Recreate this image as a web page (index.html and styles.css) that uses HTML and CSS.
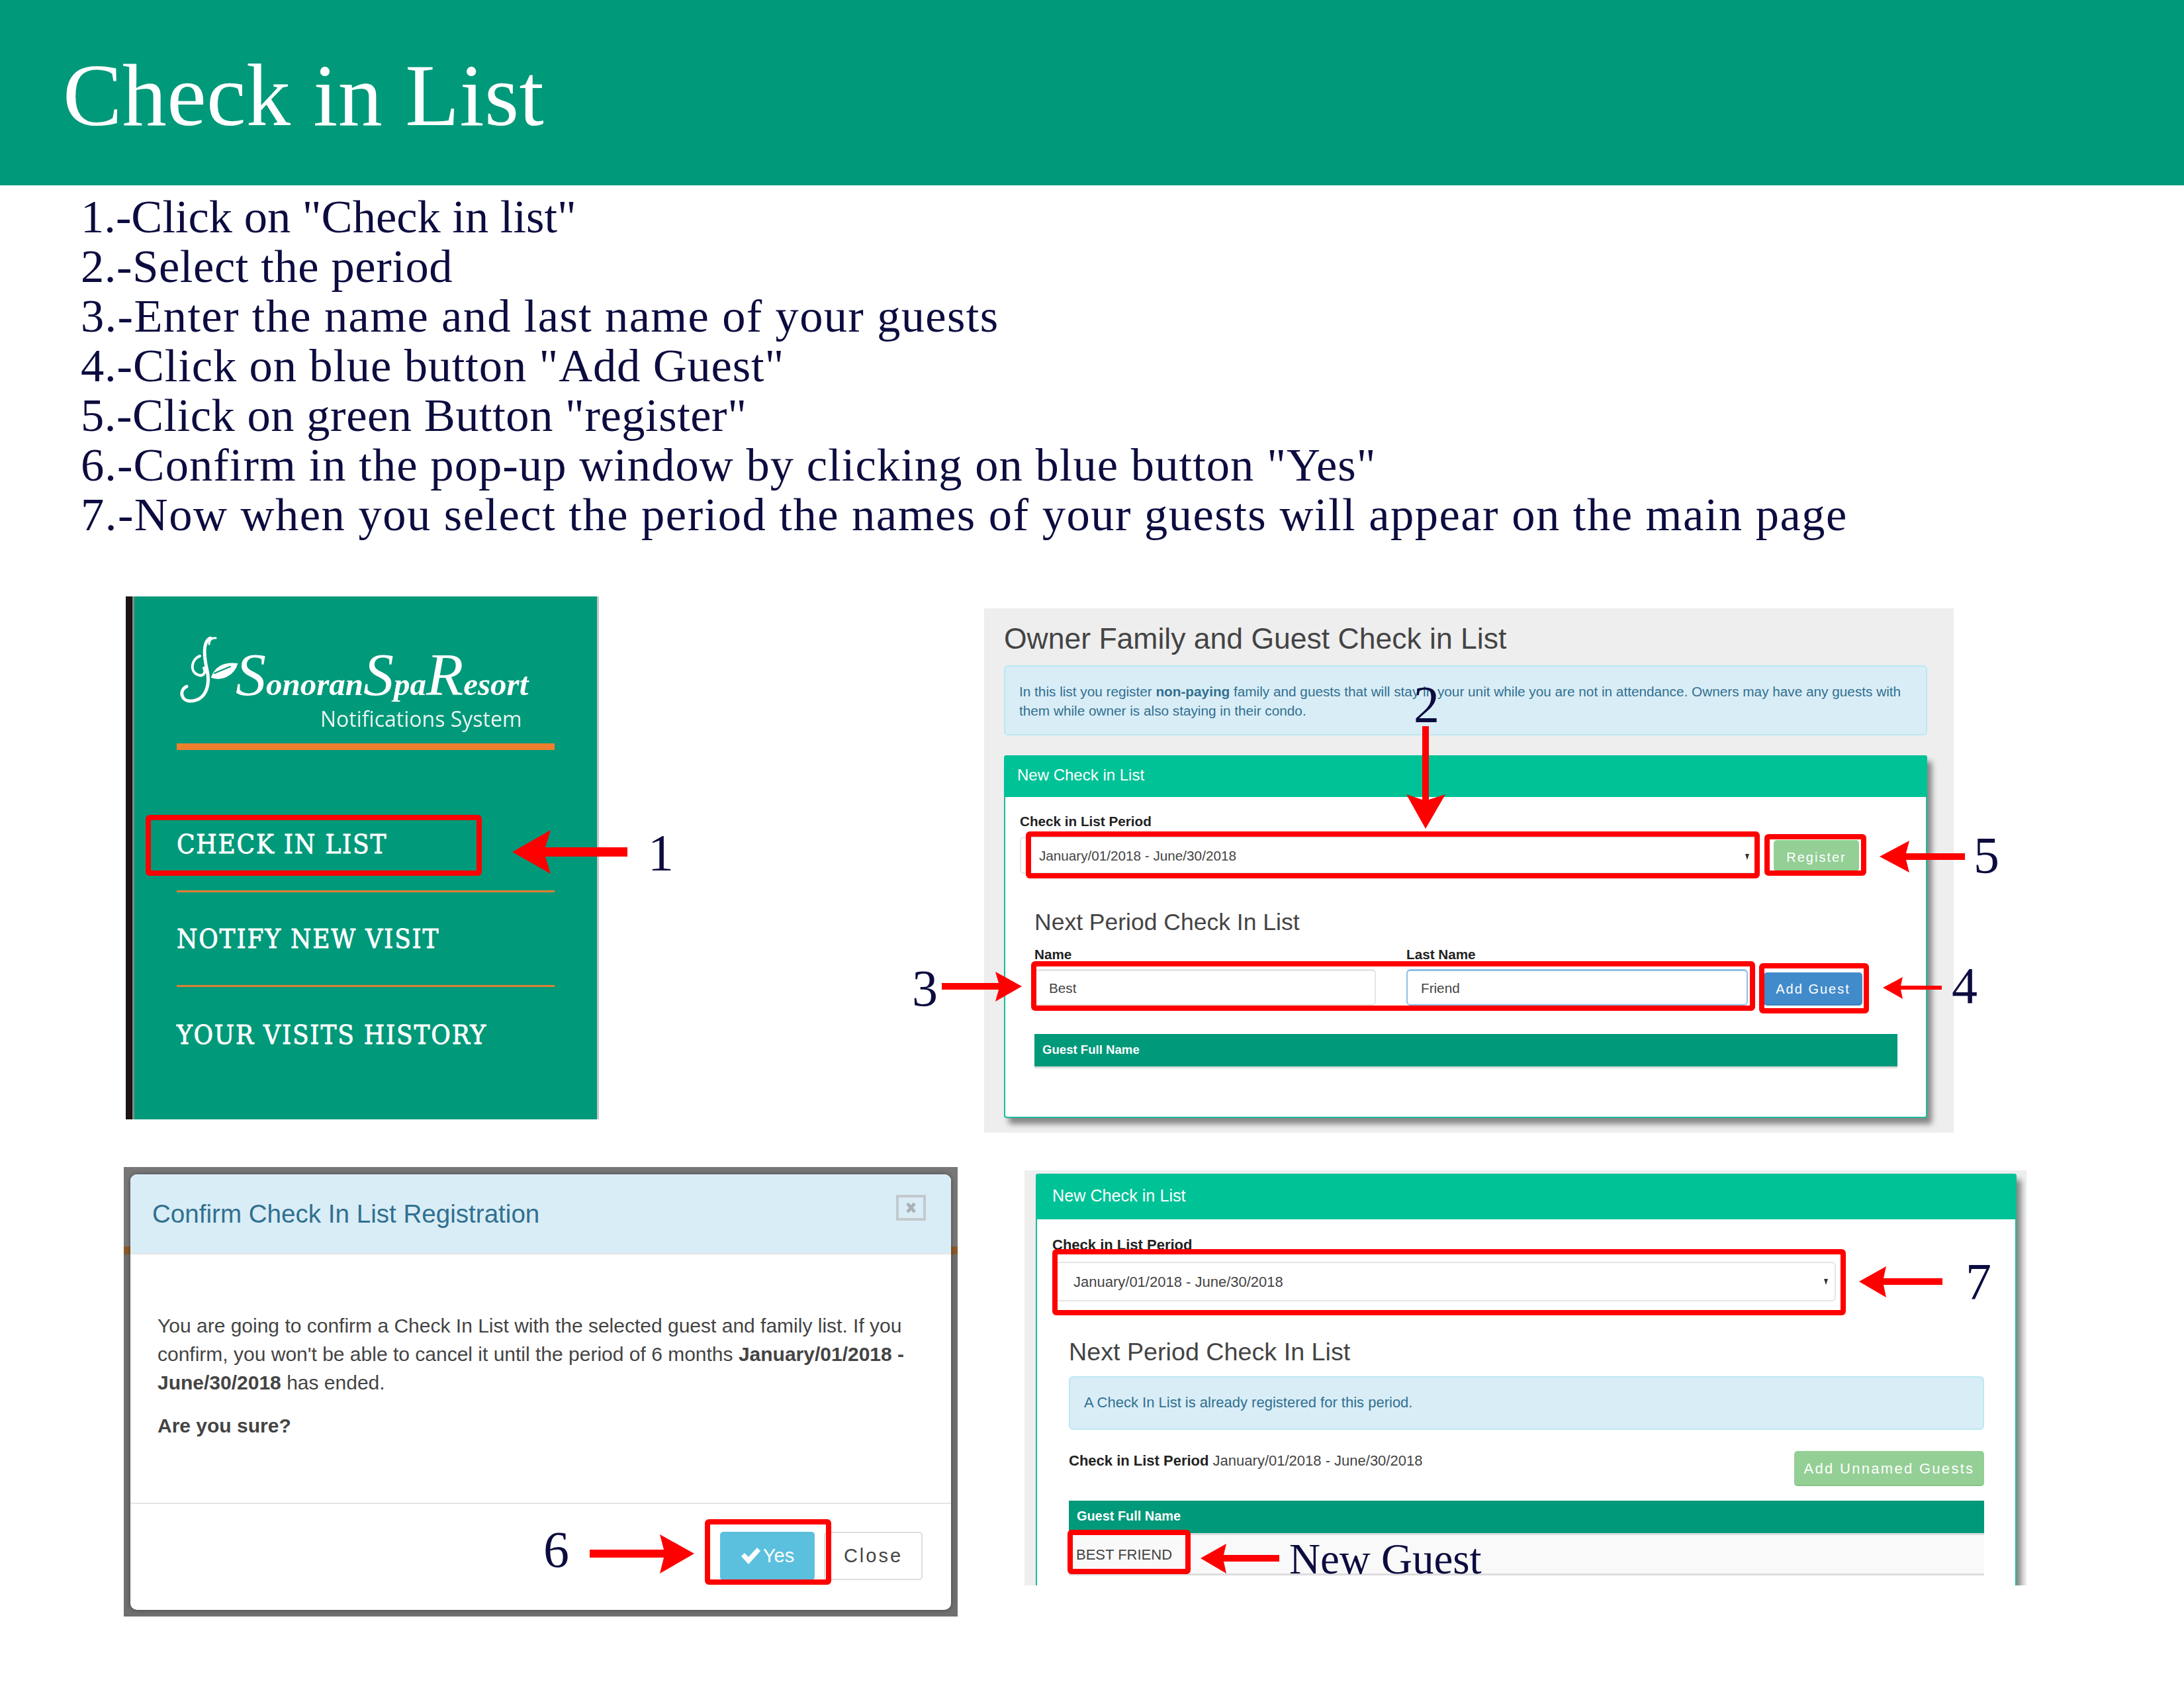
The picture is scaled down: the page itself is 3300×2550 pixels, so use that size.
FILE: index.html
```html
<!DOCTYPE html>
<html lang="en">

<head>
    <meta charset="UTF-8">
    <title>Check in List</title>
    <link rel="stylesheet" href="styles.css">
</head>

<body>
    <div class="page">
        <div class="banner">
            <h1>Check in List</h1>
        </div>
        <div class="steps">
            <p>1.-Click on "Check in list"</p>
            <p>2.-Select the period</p>
            <p>3.-Enter the name and last name of your guests</p>
            <p>4.-Click on blue button "Add Guest"</p>
            <p>5.-Click on green Button "register"</p>
            <p>6.-Confirm in the pop-up window by clicking on blue button "Yes"</p>
            <p>7.-Now when you select the period the names of your guests will appear on the main page</p>
        </div>

        <div class="figures">
            <!-- sidebar -->
            <div class="sidebar">
                <div class="logo">
                    <div class="logo-row">
                        <svg class="emblem" viewBox="0 0 90 105" fill="none" stroke="#fff" stroke-width="5" stroke-linecap="round">
                            <path d="M48 3 C36 8 38 30 43 52 C48 76 40 98 17 98 C4 98 0 82 12 76" />
                            <path d="M56 3 C50 2 46 6 46 12" stroke-width="3" />
                            <path d="M32 30 C20 34 16 52 28 58 C36 62 42 56 38 48" stroke-width="4" />
                            <path d="M50 62 C56 46 70 40 88 42 C84 56 68 68 50 62 Z" fill="#fff" stroke-width="2" />
                            <path d="M54 56 L78 46" stroke="#00997a" stroke-width="2" />
                        </svg>
                        <p class="logo-name"><span class="cap">S</span>onoran<span class="cap">S</span>pa<span class="cap">R</span>esort</p>
                    </div>
                    <p class="logo-sub">Notifications System</p>
                </div>
                <ul class="side-nav">
                    <li>CHECK IN LIST</li>
                    <li>NOTIFY NEW VISIT</li>
                    <li>YOUR VISITS HISTORY</li>
                </ul>
            </div>

            <!-- new check in list form -->
            <div class="app">
                <h2>Owner Family and Guest Check in List</h2>
                <div class="info">In this list you register <b>non-paying</b> family and guests that will stay in your unit while you are not in attendance. Owners may have any guests with<br>them while owner is also staying in their condo.</div>
                <div class="card">
                    <div class="card-head">New Check in List</div>
                    <div class="card-body">
                        <label class="field-label">Check in List Period</label>
                        <div class="period-row">
                            <div class="select">January/01/2018 - June/30/2018<span class="caret"></span></div>
                            <div class="btn btn-green">Register</div>
                        </div>
                        <div class="next">
                            <h3>Next Period Check In List</h3>
                            <div class="guest-form">
                                <div class="field">
                                    <label class="field-label">Name</label>
                                    <div class="input">Best</div>
                                </div>
                                <div class="field">
                                    <label class="field-label">Last Name</label>
                                    <div class="input input-focus">Friend</div>
                                </div>
                                <div class="btn btn-blue">Add Guest</div>
                            </div>
                            <div class="table-head">Guest Full Name</div>
                        </div>
                    </div>
                </div>
            </div>

            <!-- confirm popup -->
            <div class="dim">
                <div class="modal">
                    <div class="modal-head">
                        <h4>Confirm Check In List Registration</h4>
                        <svg class="modal-x" viewBox="0 0 45 39" fill="none" stroke="#c3c9cc">
                            <rect x="2" y="2" width="41" height="35" stroke-width="4" />
                            <path d="M17 13 L28 26 M28 13 L17 26" stroke="#aab2b6" stroke-width="5" />
                        </svg>
                    </div>
                    <div class="modal-body">
                        <p>You are going to confirm a Check In List with the selected guest and family list. If you<br>confirm, you won't be able to cancel it until the period of 6 months <b>January/01/2018 -<br>June/30/2018</b> has ended.</p>
                        <p><b>Are you sure?</b></p>
                    </div>
                    <div class="modal-foot">
                        <div class="btn btn-yes">
                            <svg class="check" viewBox="0 0 30 26" fill="#fff">
                                <path d="M1 14 L6 9 L12 15 L25 1 L30 6 L12 26 Z" />
                            </svg>Yes
                        </div>
                        <div class="btn btn-close">Close</div>
                    </div>
                </div>
            </div>

            <!-- registered result -->
            <div class="app app-result">
                <div class="card">
                    <div class="card-head">New Check in List</div>
                    <div class="card-body">
                        <label class="field-label">Check in List Period</label>
                        <div class="select">January/01/2018 - June/30/2018<span class="caret"></span></div>
                        <div class="next">
                            <h3>Next Period Check In List</h3>
                            <div class="info">A Check In List is already registered for this period.</div>
                            <div class="summary">
                                <span><b>Check in List Period</b> January/01/2018 - June/30/2018</span>
                                <div class="btn btn-green">Add Unnamed Guests</div>
                            </div>
                            <div class="table-head">Guest Full Name</div>
                            <div class="table-row">BEST FRIEND</div>
                        </div>
                    </div>
                </div>
            </div>
        </div>

        <!-- red marks drawn over the screenshots -->
        <svg class="marks" viewBox="0 0 3300 2550">
            <g class="boxes">
                <rect x="224" y="1235" width="500" height="84" stroke-width="6" />
                <rect x="1554" y="1260" width="1101" height="63" />
                <rect x="2670" y="1264" width="146" height="55" />
                <rect x="1562" y="1456" width="1086" height="67" />
                <rect x="2662" y="1459" width="158" height="68" />
                <rect x="1069" y="2299" width="183" height="91" />
                <rect x="1594" y="1891" width="1191" height="92" />
                <rect x="1617" y="2315" width="178" height="59" />
            </g>
            <g fill="#fe0000">
                <polygon points="774,1287 832,1254 824,1280 948,1280 948,1294 824,1294 832,1320" />
                <polygon points="2154,1252 2125,1200 2149,1208 2149,1097 2159,1097 2159,1208 2184,1200" />
                <polygon points="2840,1294 2885,1270 2880,1289 2969,1289 2969,1299 2880,1299 2885,1318" />
                <polygon points="1544,1490 1504,1468 1509,1485 1423,1485 1423,1495 1509,1495 1504,1513" />
                <polygon points="2845,1492 2875,1476 2872,1489 2934,1489 2934,1495 2872,1495 2875,1509" />
                <polygon points="1049,2347 997,2318 1003,2341 891,2341 891,2353 1003,2353 997,2377" />
                <polygon points="2809,1936 2850,1913 2846,1931 2935,1931 2935,1941 2846,1941 2850,1960" />
                <polygon points="1814,2354 1853,2332 1849,2349 1933,2349 1933,2359 1849,2359 1853,2377" />
            </g>
            <g class="mark-text">
                <text x="979" y="1314">1</text>
                <text x="2136" y="1090">2</text>
                <text x="1378" y="1519">3</text>
                <text x="2949" y="1515">4</text>
                <text x="2982" y="1318">5</text>
                <text x="821" y="2367">6</text>
                <text x="2970" y="1962">7</text>
                <text class="new-guest" x="1948" y="2377">New Guest</text>
            </g>
        </svg>
    </div>
</body>

</html>
```

FILE: styles.css
```css
* {
    margin: 0;
    padding: 0;
    box-sizing: border-box;
}

body {
    background-color: #fff;
    font-family: "Liberation Sans", Arial, sans-serif;
}

.page {
    position: relative;
    width: 3300px;
    height: 2550px;
    overflow: hidden;
}

/* top of the sheet */
.banner {
    height: 280px;
    padding: 7px 0 0 95px;
    background-color: #00997a;
    display: flex;
    align-items: center;
}

h1 {
    color: #fff;
    font: normal 134px/1 "Liberation Serif", serif;
    letter-spacing: 0.4px;
}

.steps {
    padding: 10px 0 0 122px;
    color: #0c0c40;
    font: 70.5px/75px "Liberation Serif", serif;
}

.steps p:nth-child(2) {
    letter-spacing: 0.6px;
}

.steps p:nth-child(3) {
    letter-spacing: 1.35px;
}

.steps p:nth-child(4) {
    letter-spacing: 0.87px;
}

.steps p:nth-child(5) {
    letter-spacing: 0.54px;
}

.steps p:nth-child(6) {
    letter-spacing: 1.07px;
}

.steps p:nth-child(7) {
    letter-spacing: 1.5px;
}

.figures {
    display: grid;
    grid-template-columns: 1300px 1700px;
    grid-template-rows: 862px 679px;
    margin-top: 86px;
    padding-left: 187px;
}

/* sidebar */
.sidebar {
    width: 715px;
    height: 790px;
    margin-left: 3px;
    padding: 0 64px 0 67px;
    background-color: #00997a;
    border-left: 10px solid #1c1412;
    border-right: 3px solid #c4c9c7;
    box-shadow: inset 3px 0 #7d8f89;
}

.logo {
    height: 232px;
    padding-top: 60px;
    border-bottom: 10px solid #ee7f2d;
    width: 571px;
    color: #fff;
    filter: blur(0.7px);
}

.logo-row {
    display: flex;
    align-items: flex-end;
    margin-left: 3px;
}

.emblem {
    width: 90px;
    height: 105px;
}

.logo-name {
    font: italic bold 49px/72px "Liberation Serif", serif;
    margin: 0 0 -4px -4px;
    white-space: nowrap;
}

.logo-name .cap {
    font-weight: normal;
    font-size: 92px;
    line-height: 50px;
}

.logo-sub {
    margin: 0 0 0 217px;
    font: 32px/40px "Open Sans", sans-serif;
    white-space: nowrap;
    color: #eaf5f1;
}

.side-nav {
    list-style: none;
    margin-top: 72px;
    width: 571px;
}

.side-nav li {
    height: 143px;
    display: flex;
    align-items: center;
    border-bottom: 3px solid #e07f33;
    color: #fff;
    font: 40px "DejaVu Serif Condensed", "DejaVu Serif", serif;
    letter-spacing: 1.8px;
    -webkit-text-stroke: 0.8px #fff;
    white-space: nowrap;
}

.side-nav li:last-child {
    border-bottom: 0;
}

/* screenshot of the form */
.app {
    width: 1465px;
    height: 792px;
    margin-top: 18px;
    padding: 16px 40px 0 30px;
    background-color: #eee;
}

h2 {
    color: #444;
    font-weight: normal;
    font-size: 44.5px;
    line-height: 60px;
    margin-bottom: 10px;
}

.info {
    height: 106px;
    padding: 23px 21px;
    color: #31708f;
    background-color: #d9edf7;
    border: 2px solid #bce8f1;
    border-radius: 6px;
    font-size: 20.75px;
    line-height: 29px;
    white-space: nowrap;
}

.card {
    height: 548px;
    margin-top: 30px;
    background-color: #fff;
    border: 2px solid #1abc9c;
    border-radius: 4px;
    box-shadow: 7px 9px 8px #858585;
}

.card-head {
    height: 63px;
    padding-left: 20px;
    margin: -2px -2px 0;
    border-radius: 4px 4px 0 0;
    background-color: #00c297;
    color: #fff;
    font-size: 24px;
    line-height: 60px;
}

.card-body {
    padding: 25px 43px 0 22px;
}

.field-label {
    display: block;
    color: #222;
    font-size: 20.7px;
    font-weight: bold;
    line-height: 24px;
    white-space: nowrap;
}

.period-row {
    display: flex;
    align-items: center;
    gap: 25px;
    margin-top: 11px;
}

.select {
    position: relative;
    width: 1114px;
    height: 56px;
    padding-left: 27px;
    border: 2px solid #e3e6e6;
    border-radius: 6px;
    color: #444;
    font-size: 20.7px;
    line-height: 54px;
}

.caret {
    position: absolute;
    right: 10px;
    top: 24px;
    border-top: 9px solid #333;
    border-left: 3.5px solid transparent;
    border-right: 3.5px solid transparent;
}

.btn {
    color: #fff;
    font-size: 20px;
    letter-spacing: 2px;
    text-align: center;
    border-radius: 5px;
    white-space: nowrap;
}

.btn-green {
    width: 129px;
    height: 47px;
    line-height: 52px;
    background-color: #94cf95;
    border-bottom: 2px solid #86c287;
}

.next {
    margin-left: 22px;
}

h3 {
    color: #444;
    font-weight: normal;
    font-size: 35.5px;
    line-height: 40px;
    margin-top: 53px;
}

.guest-form {
    display: flex;
    align-items: flex-end;
    margin-top: 17px;
    gap: 46px;
}

.field {
    width: 516px;
}

.input {
    height: 55px;
    margin-top: 10px;
    padding-left: 20px;
    border: 2px solid #e6e6e6;
    border-top-width: 3px;
    border-radius: 6px;
    color: #444;
    font-size: 20.7px;
    line-height: 52px;
}

.input-focus {
    border-color: #8fbfe6;
}

.btn-blue {
    width: 149px;
    height: 50px;
    margin-left: -22px;
    line-height: 50px;
    background-color: #428bca;
    border-bottom: 2px solid #357ebd;
}

.table-head {
    height: 52px;
    margin-top: 43px;
    padding-left: 12px;
    background-color: #00997a;
    border-bottom: 3px solid #ddd;
    color: #fff;
    font-size: 18.6px;
    font-weight: bold;
    line-height: 47px;
}

/* popup on its darkened page */
.dim {
    width: 1260px;
    height: 679px;
    padding: 11px 10px;
    background: linear-gradient(#777 0 120px, #8a5a2a 120px 132px, #6f6f6f 132px 100%);
}

.modal {
    height: 658px;
    background-color: #fff;
    border-radius: 10px;
    overflow: hidden;
    box-shadow: 0 0 6px rgba(0, 0, 0, 0.4);
}

.modal-head {
    height: 121px;
    padding: 0 38px 0 33px;
    display: flex;
    align-items: center;
    justify-content: space-between;
    background-color: #d9edf7;
    border-bottom: 2px solid #e5e5e5;
}

h4 {
    color: #31708f;
    font-weight: normal;
    font-size: 38.6px;
}

.modal-x {
    width: 45px;
    height: 39px;
    margin-bottom: 18px;
}

.modal-body {
    height: 377px;
    padding: 86px 0 0 41px;
    border-bottom: 2px solid #e5e5e5;
    color: #444;
    font-size: 30px;
    line-height: 43px;
}

.modal-body p {
    margin-bottom: 22px;
}

.modal-foot {
    display: flex;
    justify-content: flex-end;
    gap: 14px;
    padding: 42px 43px 0 0;
}

.btn-yes,
.btn-close {
    height: 73px;
    font-size: 29px;
    line-height: 73px;
}

.btn-yes {
    width: 143px;
    letter-spacing: 0;
    background-color: #5bc0de;
}

.check {
    width: 30px;
    height: 26px;
    margin-right: 4px;
    vertical-align: -3px;
}

.btn-close {
    width: 149px;
    line-height: 69px;
    border: 2px solid #ddd;
    color: #444;
    letter-spacing: 3px;
}

/* same card after registering */
.app-result {
    width: 1514px;
    height: 627px;
    margin: 5px 0 0 61px;
    padding: 5px 15px 0 17px;
    overflow: hidden;
}

.app-result .card {
    margin-top: 0;
    height: 700px;
}

.app-result .card-head {
    height: 69px;
    font-size: 25.2px;
    line-height: 66px;
    padding-left: 25px;
}

.app-result .card-body {
    padding: 26px 47px 0 23px;
}

.app-result .field-label {
    font-size: 22px;
    line-height: 26px;
    margin-bottom: 12px;
}

.app-result .select {
    width: 1184px;
    height: 60px;
    padding-left: 30px;
    font-size: 22px;
    line-height: 58px;
}

.app-result .next {
    margin-left: 25px;
}

.app-result h3 {
    font-size: 37.7px;
    line-height: 44px;
    margin-top: 54px;
}

.app-result .info {
    height: 81px;
    margin-top: 15px;
    padding: 23px 21px;
    font-size: 22px;
}

.summary {
    display: flex;
    justify-content: space-between;
    margin-top: 32px;
    color: #444;
    font-size: 22px;
    line-height: 30px;
}

.summary b {
    color: #222;
}

.summary .btn-green {
    width: 287px;
    height: 53px;
    line-height: 54px;
    font-size: 22px;
    letter-spacing: 2.3px;
}

.app-result .table-head {
    height: 52px;
    margin-top: 22px;
    font-size: 19.9px;
}

.table-row {
    height: 61px;
    padding-left: 11px;
    background-color: #f9f9f9;
    border-bottom: 3px solid #ddd;
    color: #444;
    font-size: 22px;
    line-height: 60px;
}

/* red annotations */
.marks {
    position: absolute;
    left: 0;
    top: 0;
    width: 3300px;
    height: 2550px;
}

.boxes rect {
    fill: none;
    stroke: #fe0000;
    stroke-width: 8px;
    rx: 2px;
}

.mark-text {
    fill: #0c0c40;
    font: 78px "Liberation Serif", serif;
}

.mark-text .new-guest {
    font-size: 65px;
}
```
